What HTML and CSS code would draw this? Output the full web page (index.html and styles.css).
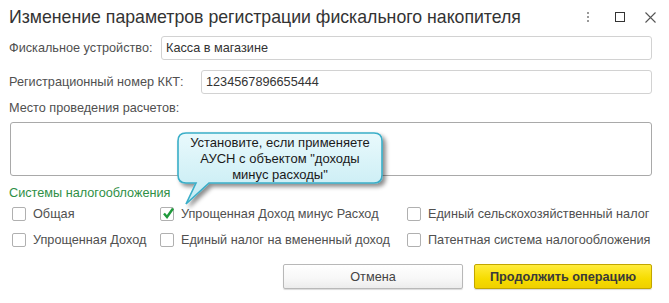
FILE: index.html
```html
<!DOCTYPE html>
<html lang="ru">
<head>
<meta charset="utf-8">
<title>Изменение параметров регистрации фискального накопителя</title>
<link rel="stylesheet" href="styles.css">
</head>
<body>
<div class="dialog">
  <div class="titlebar">
    <div class="title">Изменение параметров регистрации фискального накопителя</div>
    <div class="win-icons">
      <svg class="ic ic-more" width="6" height="12" viewBox="0 0 6 12"><rect x="2" y="1" width="2" height="2" fill="#9a9a9a"/><rect x="2" y="5" width="2" height="2" fill="#9a9a9a"/><rect x="2" y="9" width="2" height="2" fill="#9a9a9a"/></svg>
      <svg class="ic ic-max" width="10" height="10" viewBox="0 0 10 10"><rect x="0.5" y="0.5" width="9" height="9" fill="none" stroke="#333" stroke-width="1"/></svg>
      <svg class="ic ic-close" width="11" height="11" viewBox="0 0 11 11"><path d="M0.5 0.5 L10.5 10.5 M10.5 0.5 L0.5 10.5" stroke="#555" stroke-width="1.1" fill="none"/></svg>
    </div>
  </div>

  <div class="form">
    <div class="field-row">
      <span class="label">Фискальное устройство:</span>
      <div class="input input-1">Касса в магазине</div>
    </div>
    <div class="field-row row-2">
      <span class="label">Регистрационный номер ККТ:</span>
      <div class="input input-2">1234567896655444</div>
    </div>
    <div class="label place-label">Место проведения расчетов:</div>
    <div class="textarea"></div>

    <div class="group-title">Системы налогообложения</div>
    <div class="checks">
      <label class="check"><span class="box"></span><span>Общая</span></label>
      <label class="check"><span class="box checked"><svg width="14" height="14" viewBox="0 0 14 14"><path d="M3 6.5 L6 10 L12 1.5" fill="none" stroke="#1f9a3c" stroke-width="2.4" stroke-linejoin="miter"/></svg></span><span>Упрощенная Доход минус Расход</span></label>
      <label class="check"><span class="box"></span><span>Единый сельскохозяйственный налог</span></label>
      <label class="check"><span class="box"></span><span>Упрощенная Доход</span></label>
      <label class="check"><span class="box"></span><span>Единый налог на вмененный доход</span></label>
      <label class="check"><span class="box"></span><span>Патентная система налогообложения</span></label>
    </div>

    <div class="buttons">
      <button class="btn btn-cancel">Отмена</button>
      <button class="btn btn-primary">Продолжить операцию</button>
    </div>
  </div>

  <svg class="callout-shape" width="230" height="95" viewBox="0 0 230 95">
    <defs>
      <linearGradient id="cg" x1="0" y1="0" x2="0" y2="1">
        <stop offset="0" stop-color="#e9f9fc"/>
        <stop offset="1" stop-color="#c3ebf3"/>
      </linearGradient>
      <filter id="sh" x="-10%" y="-10%" width="130%" height="140%">
        <feDropShadow dx="3" dy="3" stdDeviation="2" flood-color="#000" flood-opacity="0.45"/>
      </filter>
    </defs>
    <path d="M16 8 H204 Q212 8 212 16 V50 Q212 58 204 58 H39 L16 79 L26 58 H16 Q8 58 8 50 V16 Q8 8 16 8 Z" fill="url(#cg)" stroke="#3aaec8" stroke-width="1.6" filter="url(#sh)"/>
  </svg>
  <div class="callout-text">Установите, если применяете<br>АУСН с объектом "доходы<br>минус расходы"</div>
</div>
</body>
</html>
```

FILE: styles.css
```css
* { box-sizing: border-box; }
html, body { margin: 0; padding: 0; background: #fff; }
body {
  font-family: "Liberation Sans", Arial, sans-serif;
  font-size: 12.7px;
  color: #505050;
}
.dialog {
  position: relative;
  width: 669px;
  height: 303px;
  overflow: hidden;
}
.titlebar {
  height: 34px;
  display: flex;
  align-items: center;
  padding-left: 9px;
}
.title {
  font-size: 17.7px;
  color: #333;
  white-space: nowrap;
}
.win-icons {
  margin-left: auto;
  display: flex;
  align-items: center;
  padding-right: 13px;
}
.ic { display: block; }
.ic-more { margin-right: 24px; }
.ic-max { margin-right: 20px; }

.form {
  padding: 0 17px 0 9px;
  display: flex;
  flex-direction: column;
}
.field-row {
  display: flex;
  align-items: center;
  height: 24px;
  margin-top: 2px;
}
.row-2 { margin-top: 10px; }
.label { white-space: nowrap; }
.input {
  height: 24px;
  border: 1px solid #d2d2d2;
  border-radius: 3px;
  padding-left: 4px;
  line-height: 22px;
  color: #333;
}
.input-1 { width: 491px; margin-left: auto; }
.input-2 { width: 451px; margin-left: auto; }
.place-label {
  margin-top: 6px;
  line-height: 16px;
}
.textarea {
  margin-top: 6px;
  margin-left: 1px;
  height: 54px;
  border: 1px solid #a9a9a9;
  border-radius: 3px;
}
.group-title {
  margin-top: 9px;
  line-height: 16px;
  color: #2f8f46;
}
.checks {
  display: grid;
  grid-template-columns: 148px 247px auto;
  grid-auto-rows: 26px;
  padding-left: 3px;
}
.check {
  display: flex;
  align-items: center;
  gap: 7px;
  white-space: nowrap;
}
.box {
  width: 14px;
  height: 14px;
  border: 1px solid #b0b0b0;
  border-radius: 2px;
  background: #fff;
  position: relative;
  flex: none;
}
.box svg {
  position: absolute;
  left: 0;
  top: -1px;
}
.buttons {
  margin-top: 11px;
  display: flex;
  justify-content: flex-end;
  gap: 11px;
}
.btn {
  height: 25px;
  font-family: "Liberation Sans", Arial, sans-serif;
  font-size: 12.7px;
  border-radius: 2px;
  padding: 0;
}
.btn-cancel {
  width: 180px;
  color: #444;
  border: 1px solid #b8b8b8;
  background: linear-gradient(#ffffff, #f7f7f7 60%, #ececec);
  box-shadow: 0 1px 1px rgba(0,0,0,0.15);
}
.btn-primary {
  width: 178px;
  font-weight: bold;
  color: #3a3a3a;
  border: 1px solid #c2a600;
  background: linear-gradient(#ffec3d, #f6dc00 60%, #efd000);
  box-shadow: 0 1px 1px rgba(0,0,0,0.15);
}
.callout-shape {
  position: absolute;
  left: 170px;
  top: 125px;
}
.callout-text {
  position: absolute;
  left: 178px;
  top: 135px;
  width: 204px;
  text-align: center;
  font-size: 13px;
  line-height: 16px;
  color: #1a1a1a;
}
```
